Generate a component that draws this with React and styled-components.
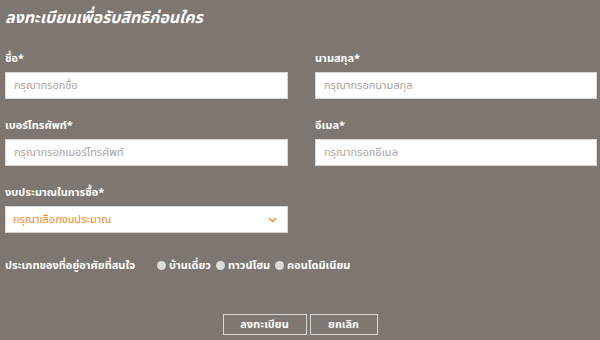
import styled, { createGlobalStyle } from 'styled-components';

const GlobalStyle = createGlobalStyle`
    html, body {
        margin: 0;
        padding: 0;
        background-color: #7e7670;
    }
    body {
        font-family: Tahoma, "Noto Sans Thai", "Noto Sans", "DejaVu Sans", sans-serif;
    }
`;

const Page = styled.div`
    width: 600px;
    height: 340px;
    box-sizing: border-box;
    padding: 7px 3px 0 5px;
    background-color: #7e7670;
    overflow: hidden;
`;

const Title = styled.h1`
    margin: 0 0 23px 0;
    color: #ffffff;
    font-size: 16px;
    font-weight: 700;
    font-style: italic;
    line-height: 22px;
`;

const Grid = styled.div`
    display: grid;
    grid-template-columns: 283px 282px;
    column-gap: 27px;
    row-gap: 20px;
`;

const Field = styled.div`
    display: flex;
    flex-direction: column;
`;

const Label = styled.label`
    color: #ffffff;
    font-size: 11px;
    font-weight: 700;
    line-height: 14px;
    margin-bottom: 6px;
`;

const Input = styled.input`
    box-sizing: border-box;
    height: 27px;
    width: 100%;
    border: 1px solid #d9d6d3;
    background: #ffffff;
    padding: 0 8px;
    font-family: inherit;
    font-size: 11px;
    outline: none;
    &::placeholder {
        color: #a8a4a0;
    }
`;

const Select = styled.div`
    box-sizing: border-box;
    height: 27px;
    width: 100%;
    border: 1px solid #d9d6d3;
    background: #ffffff;
    padding: 0 10px 0 7px;
    display: flex;
    align-items: center;
    justify-content: space-between;
    color: #ef8a1c;
    font-size: 11px;
`;

const RadioRow = styled.div`
    display: flex;
    align-items: center;
    margin-top: 23px;
    height: 18px;
`;

const RadioTitle = styled.span`
    color: #ffffff;
    font-size: 11px;
    font-weight: 700;
    width: 152px;
`;

const Option = styled.label`
    display: flex;
    align-items: center;
    gap: 3px;
    margin-right: 5px;
    color: #ffffff;
    font-size: 11px;
    font-weight: 700;
`;

const Dot = styled.span`
    width: 9px;
    height: 9px;
    border-radius: 50%;
    background: #dcdad8;
    display: inline-block;
`;

const Actions = styled.div`
    display: flex;
    justify-content: center;
    gap: 3px;
    margin-top: 40px;
    padding-right: 2px;
`;

const Button = styled.button`
    box-sizing: border-box;
    height: 21px;
    width: ${props => props.$w}px;
    background: transparent;
    border: 1.5px solid #dad6d2;
    color: #ffffff;
    font-family: inherit;
    font-size: 11px;
    font-weight: 700;
    padding: 0;
    cursor: pointer;
`;

function Chevron() {
    return (
        <svg width="9" height="6" viewBox="0 0 9 6">
            <path d="M1 1 L4.5 4.5 L8 1" fill="none" stroke="#ef8a1c" strokeWidth="1.4" />
        </svg>
    );
}

function App() {
    const types = ['บ้านเดี่ยว', 'ทาวน์โฮม', 'คอนโดมิเนียม'];
    return (
        <Page>
            <GlobalStyle />
            <Title>ลงทะเบียนเพื่อรับสิทธิก่อนใคร</Title>
            <Grid>
                <Field>
                    <Label>ชื่อ*</Label>
                    <Input placeholder="กรุณากรอกชื่อ" />
                </Field>
                <Field>
                    <Label>นามสกุล*</Label>
                    <Input placeholder="กรุณากรอกนามสกุล" />
                </Field>
                <Field>
                    <Label>เบอร์โทรศัพท์*</Label>
                    <Input placeholder="กรุณากรอกเบอร์โทรศัพท์" />
                </Field>
                <Field>
                    <Label>อีเมล*</Label>
                    <Input placeholder="กรุณากรอกอีเมล" />
                </Field>
                <Field>
                    <Label>งบประมาณในการซื้อ*</Label>
                    <Select>
                        <span>กรุณาเลือกงบประมาณ</span>
                        <Chevron />
                    </Select>
                </Field>
            </Grid>
            <RadioRow>
                <RadioTitle>ประเภทของที่อยู่อาศัยที่สนใจ</RadioTitle>
                {types.map(t => (
                    <Option key={t}>
                        <Dot />
                        {t}
                    </Option>
                ))}
            </RadioRow>
            <Actions>
                <Button $w={84}>ลงทะเบียน</Button>
                <Button $w={68}>ยกเลิก</Button>
            </Actions>
        </Page>
    );
}

export default App;
